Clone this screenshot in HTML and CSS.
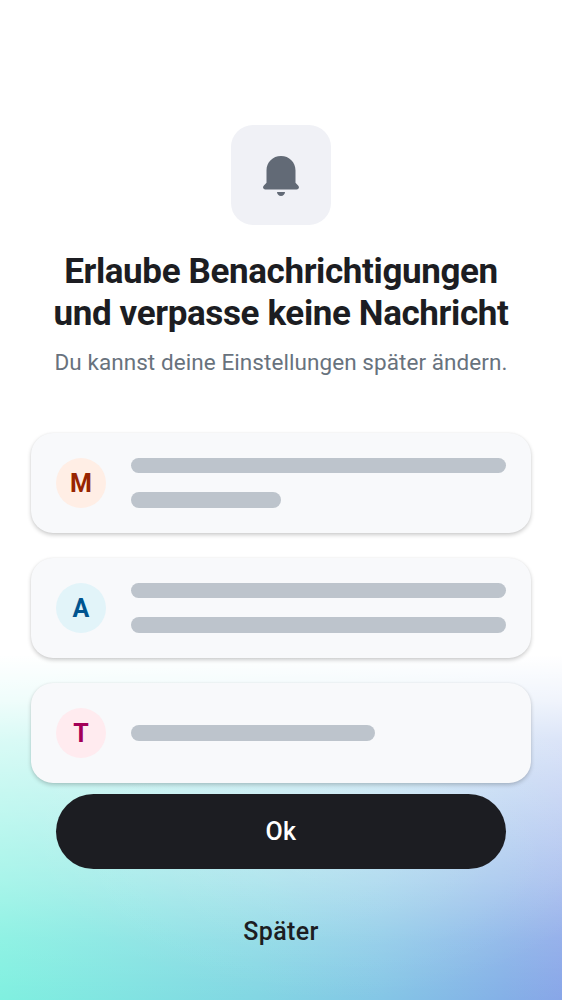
FILE: index.html
```html
<!DOCTYPE html>
<html lang="de">
<head>
<meta charset="utf-8">
<title>Benachrichtigungen</title>
<link rel="stylesheet" href="styles.css">
</head>
<body>
<main class="screen">
  <div class="bell-tile">
    <svg class="bell" viewBox="0 0 36 40" aria-hidden="true">
      <path d="M18 0C9.700 0 3.500 6.200 3.500 14.500V26.700L.9 29.400C-.8 31.100.1 33.500 2.400 33.500H33.600C35.900 33.500 36.800 31.100 35.100 29.400L32.500 26.700V14.500C32.500 6.200 26.300 0 18 0Z"/>
      <path d="M14 36H22C22 38.300 20.200 40 18 40S14 38.300 14 36Z"/>
    </svg>
  </div>
  <h1 class="title">Erlaube Benachrichtigungen<br>und verpasse keine Nachricht</h1>
  <p class="subtitle">Du kannst deine Einstellungen später ändern.</p>
  <section class="cards">
    <div class="card">
      <div class="avatar avatar-orange">M</div>
      <div class="lines"><span class="line line-top"></span><span class="line line-short"></span></div>
    </div>
    <div class="card">
      <div class="avatar avatar-blue">A</div>
      <div class="lines"><span class="line line-top"></span><span class="line"></span></div>
    </div>
    <div class="card">
      <div class="avatar avatar-pink">T</div>
      <div class="lines lines-single"><span class="line line-medium"></span></div>
    </div>
  </section>
  <div class="actions">
    <button class="button button-primary">Ok</button>
    <button class="button button-text">Später</button>
  </div>
</main>
</body>
</html>
```
FILE: styles.css
```css
* { box-sizing: border-box; }
body { margin: 0; font-family: Roboto, "Liberation Sans", sans-serif; }
.screen {
  height: 1000px;
  padding: 125px 31px 0;
  display: flex;
  flex-direction: column;
  align-items: center;
  overflow: hidden;
  background:
    radial-gradient(ellipse 300px 170px at 330px 830px, rgba(255,255,255,.16), rgba(255,255,255,0)),
    linear-gradient(to bottom, #fff 655px, rgba(255,255,255,.88) 700px, rgba(255,255,255,.7) 740px, rgba(255,255,255,.59) 780px, rgba(255,255,255,.32) 880px, rgba(255,255,255,.12) 940px, rgba(255,255,255,0) 1000px),
    linear-gradient(to right, #80f0e0, #82d6e3 46%, #84c6e6 68%, #84b0e7 90%, #88a6e8);
}
.bell-tile {
  width: 100px;
  height: 100px;
  flex: none;
  display: flex;
  justify-content: center;
  padding-top: 31px;
  border-radius: 22px;
  background: #f0f1f6;
}
.bell { width: 36px; height: 40px; fill: #626a76; }
.title {
  margin: 26px 0 0;
  font-size: 35px;
  line-height: 42px;
  font-weight: 700;
  letter-spacing: -.38px;
  color: #1c1d22;
  text-align: center;
  white-space: nowrap;
}
.subtitle {
  margin: 14px 0 0;
  font-size: 22.5px;
  line-height: 26px;
  letter-spacing: .07px;
  color: #68727d;
  white-space: nowrap;
}
.cards {
  width: 100%;
  margin-top: 58px;
  display: grid;
  gap: 25px;
}
.card {
  height: 100px;
  padding: 25px;
  display: flex;
  gap: 25px;
  border-radius: 22px;
  background: #f8f9fb;
  box-shadow: 0 2px 4px rgba(0,0,0,.2), 0 0 2px rgba(0,0,0,.05);
}
.avatar {
  width: 50px;
  height: 50px;
  flex: none;
  border-radius: 50%;
  font-size: 25px;
  line-height: 52px;
  font-weight: 700;
  text-align: center;
}
.avatar-orange { color: #982400; background: #ffeee5; }
.avatar-blue { color: #00548f; background: #e2f4f9; }
.avatar-pink { color: #a30057; background: #ffebef; }
.lines {
  flex: 1;
  display: flex;
  flex-direction: column;
  justify-content: space-between;
}
.lines-single { justify-content: center; }
.line { height: 16px; border-radius: 8px; background: #bdc4cc; }
.line-top { height: 15px; }
.line-short { width: 150px; }
.line-medium { width: 244px; }
.actions {
  width: 450px;
  margin-top: 11px;
  display: grid;
  gap: 25px;
}
.button {
  height: 75px;
  padding: 0;
  border: 0;
  border-radius: 38px;
  font: 500 25px/75px Roboto, "Liberation Sans", sans-serif;
  letter-spacing: .4px;
}
.button-primary { color: #fff; background: #1c1d22; }
.button-text { color: #1c1d22; background: transparent; }
```
